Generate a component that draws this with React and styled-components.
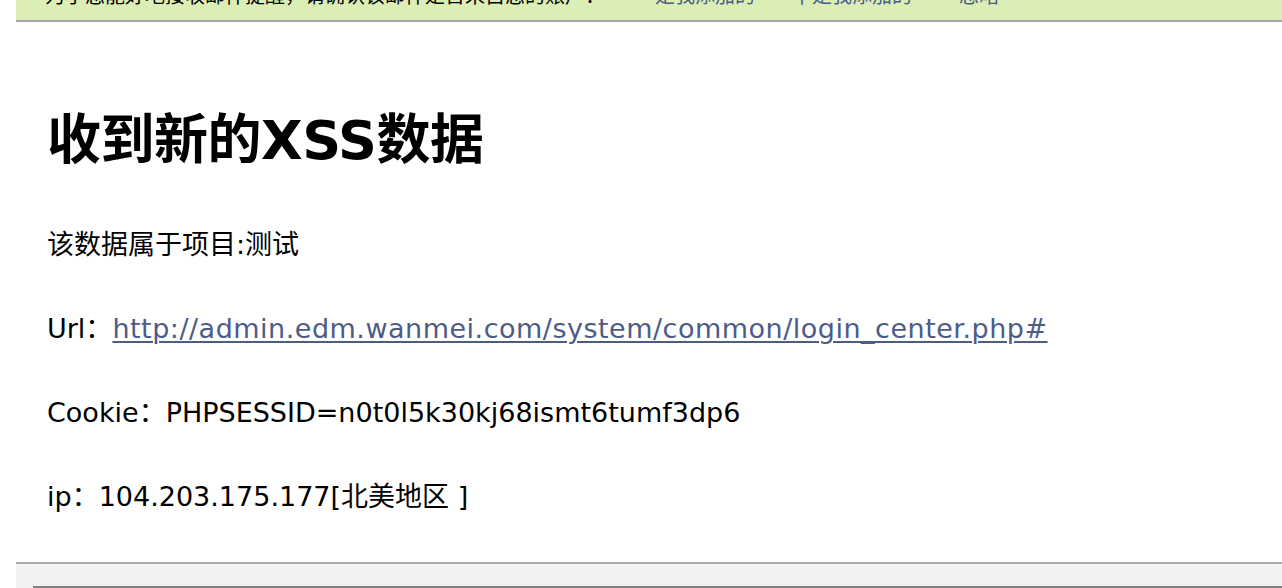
import React from 'react';
import styled, { createGlobalStyle } from 'styled-components';

const GlobalStyle = createGlobalStyle`
  html, body {
    margin: 0;
    padding: 0;
    overflow: hidden;
    background: #fff;
  }
  body {
    font-family: "DejaVu Sans", "Noto Sans CJK SC", sans-serif;
    color: #000;
  }
`;

const Page = styled.div`
  padding-left: 16px;
`;

const Notice = styled.div`
  height: 20px;
  overflow: hidden;
  display: flex;
  align-items: flex-end;
  background: #dbeeb6;
  border-bottom: 2px solid #a7a7a7;
  padding-left: 29px;
  font-family: "Noto Sans CJK SC", sans-serif;
  font-size: 20px;
  line-height: 24px;
`;

const NoticeRow = styled.div`
  display: flex;
  white-space: nowrap;
  margin-bottom: 13px;
`;

const NoticeLink = styled.a`
  color: #4d5c86;
  text-decoration: none;
  margin-left: ${p => p.$gap}px;
`;

const Content = styled.div`
  padding: 0 0 0 31px;
  height: 540px;
  display: flex;
  flex-direction: column;
`;

const Heading = styled.h1`
  margin: 87px 0 0;
  font-family: "DejaVu Sans", "Noto Sans CJK SC", sans-serif;
  font-size: 54px;
  line-height: 64px;
  font-weight: bold;
  letter-spacing: -0.5px;
`;

const Lines = styled.div`
  margin-top: 51px;
  display: flex;
  flex-direction: column;
  gap: 42px;
`;

const Line = styled.div`
  font-size: 27px;
  line-height: 42px;
  white-space: nowrap;
`;

const Link = styled.a`
  color: #4d5c86;
  text-decoration: underline;
  text-underline-offset: 3px;
  text-decoration-thickness: 2px;
  letter-spacing: 0.5px;
`;

const Footer = styled.div`
  border-top: 2px solid #a9a9a9;
  background: #f2f2f2;
  padding: 22px 0 0 17px;
  height: 40px;
`;

const FooterBox = styled.div`
  border-top: 2px solid #808080;
  height: 40px;
`;

export default function App() {
  return (
    <>
      <GlobalStyle />
      <Page>
        <Notice>
          <NoticeRow>
            <span>为了您能好地接收邮件提醒，请确认该邮件是否来自您的账户：</span>
            <NoticeLink $gap={50} href="#">是我添加的</NoticeLink>
            <NoticeLink $gap={37} href="#">不是我添加的</NoticeLink>
            <NoticeLink $gap={47} href="#">忽略</NoticeLink>
          </NoticeRow>
        </Notice>
        <Content>
          <Heading>收到新的XSS数据</Heading>
          <Lines>
            <Line>该数据属于项目:测试</Line>
            <Line>
              Url：<Link href="#">http://admin.edm.wanmei.com/system/common/login_center.php#</Link>
            </Line>
            <Line>Cookie：PHPSESSID=n0t0l5k30kj68ismt6tumf3dp6</Line>
            <Line>ip：104.203.175.177[北美地区 ]</Line>
          </Lines>
        </Content>
        <Footer>
          <FooterBox />
        </Footer>
      </Page>
    </>
  );
}
